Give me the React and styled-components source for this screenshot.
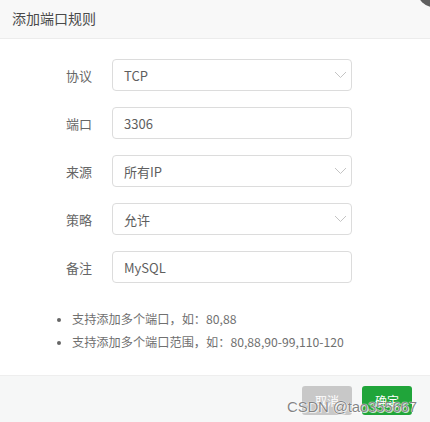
import React from "react";
import styled, { createGlobalStyle } from "styled-components";

const Global = createGlobalStyle`
  html, body { margin: 0; padding: 0; background: #fff; }
  body { font-family: "Noto Sans CJK SC", "Noto Sans", sans-serif; overflow: hidden; }
  * { box-sizing: border-box; }
`;

const Dialog = styled.div`
  position: relative;
  width: 430px;
  height: 422px;
  display: flex;
  flex-direction: column;
  overflow: hidden;
  background: #fff;
`;

const Header = styled.div`
  height: 39px;
  flex: none;
  display: flex;
  align-items: center;
  padding: 0 0 2px 12px;
  background: #f8f8f8;
  border-bottom: 1px solid #ececec;
  font-size: 14px;
  color: #4a4a4a;
`;

const Close = styled.div`
  position: absolute;
  top: -23px;
  right: -18px;
  width: 30px;
  height: 30px;
  border-radius: 50%;
  background: #5f5f5f;
`;

const Body = styled.div`
  flex: 1;
  padding-top: 20px;
  display: flex;
  flex-direction: column;
`;

const Form = styled.div`
  display: flex;
  flex-direction: column;
  gap: 16px;
`;

const Row = styled.div`
  display: flex;
  align-items: center;
  height: 32px;
`;

const Label = styled.div`
  width: 93px;
  padding-right: 1px;
  text-align: right;
  font-size: 13px;
  color: #666;
  margin-right: 19px;
`;

const Field = styled.div`
  width: 240px;
  height: 32px;
  border: 1px solid #dcdcdc;
  border-radius: 4px;
  display: flex;
  align-items: center;
  justify-content: space-between;
  padding: 0 4px 0 11px;
  font-size: 13px;
  color: #5e5e5e;
  background: #fff;
`;

const Chevron = styled.svg`
  width: 13px;
  height: 8px;
`;

const Tips = styled.ul`
  margin: 25px 0 0 0;
  padding-left: 72px;
  list-style: disc;
  font-size: 12.2px;
  color: #707070;
  line-height: 23px;
  li::marker { color: #666; font-size: 11px; }
`;

const Footer = styled.div`
  height: 47px;
  flex: none;
  background: #f6f7f7;
  border-top: 1px solid #eeeeee;
  display: flex;
  justify-content: flex-end;
  align-items: flex-start;
  gap: 10px;
  padding: 10px 18px 0 0;
  position: relative;
`;

const Button = styled.div`
  width: 50px;
  height: 29px;
  border-radius: 3px;
  display: flex;
  align-items: center;
  justify-content: center;
  font-size: 12px;
  color: #fff;
  background: ${(p) => (p.$primary ? "#20a53a" : "#c8c8c8")};
`;

const Watermark = styled.div`
  position: absolute;
  left: 287px;
  top: 22px;
  font-family: "Liberation Sans", Arial, sans-serif;
  font-size: 15px;
  letter-spacing: -0.2px;
  color: rgba(110, 110, 110, 0.85);
  text-shadow: 0 0 1px #fff, 0 0 1px #fff, 1px 1px 0 rgba(255,255,255,0.7);
  white-space: nowrap;
`;

const Down = () => (
  <Chevron viewBox="0 0 13 8">
    <path d="M1 1 L6.5 6.5 L12 1" fill="none" stroke="#c4c4c4" strokeWidth="1" />
  </Chevron>
);

const rows = [
  { label: "协议", value: "TCP", select: true },
  { label: "端口", value: "3306" },
  { label: "来源", value: "所有IP", select: true },
  { label: "策略", value: "允许", select: true },
  { label: "备注", value: "MySQL" },
];

export default function App() {
  return (
    <Dialog>
      <Global />
      <Header>添加端口规则</Header>
      <Close />
      <Body>
        <Form>
          {rows.map((r) => (
            <Row key={r.label}>
              <Label>{r.label}</Label>
              <Field>
                <span>{r.value}</span>
                {r.select && <Down />}
              </Field>
            </Row>
          ))}
        </Form>
        <Tips>
          <li>支持添加多个端口，如：80,88</li>
          <li>支持添加多个端口范围，如：80,88,90-99,110-120</li>
        </Tips>
      </Body>
      <Footer>
        <Button>取消</Button>
        <Button $primary>确定</Button>
        <Watermark>CSDN @tao355667</Watermark>
      </Footer>
    </Dialog>
  );
}
